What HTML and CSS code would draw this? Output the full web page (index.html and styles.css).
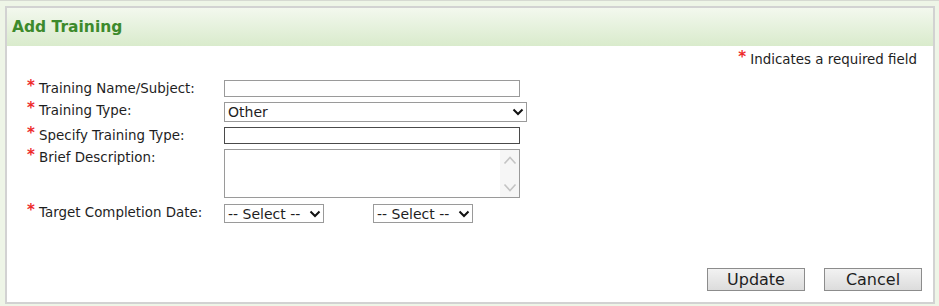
FILE: index.html
```html
<!DOCTYPE html>
<html lang="en">
<head>
    <meta charset="UTF-8">
    <title>Add Training</title>
    <link rel="stylesheet" href="styles.css">
</head>
<body>
    <div class="panel">
        <div class="panel-header">
            <h2>Add Training</h2>
        </div>

        <div class="panel-body">
            <p class="required-note"><span class="req">*</span> Indicates a required field</p>

            <!-- training form -->
            <form class="form-grid">
                <label class="field-label"><span class="req">*</span> Training Name/Subject:</label>
                <input type="text" class="text-input">

                <label class="field-label"><span class="req">*</span> Training Type:</label>
                <span class="select-wrap wide">
                    <select class="select-input">
                        <option>Other</option>
                    </select>
                    <svg class="chevron" viewBox="0 0 12 8" width="12" height="8"><path d="M1.5 1.5 L6 6 L10.5 1.5" fill="none" stroke="#111" stroke-width="2"/></svg>
                </span>

                <label class="field-label"><span class="req">*</span> Specify Training Type:</label>
                <input type="text" class="text-input dark">

                <label class="field-label"><span class="req">*</span> Brief Description:</label>
                <div class="textarea-box">
                    <textarea></textarea>
                    <div class="scroll-col">
                        <svg viewBox="0 0 14 10" width="14" height="10"><path d="M1.5 8.5 L7 2.5 L12.5 8.5" fill="none" stroke="#c4c4c4" stroke-width="1.6"/></svg>
                        <svg viewBox="0 0 14 10" width="14" height="10"><path d="M1.5 1.5 L7 7.5 L12.5 1.5" fill="none" stroke="#c4c4c4" stroke-width="1.6"/></svg>
                    </div>
                </div>

                <label class="field-label"><span class="req">*</span> Target Completion Date:</label>
                <div class="date-row">
                    <span class="select-wrap small">
                        <select class="select-input">
                            <option>-- Select --</option>
                        </select>
                        <svg class="chevron" viewBox="0 0 12 8" width="12" height="8"><path d="M1.5 1.5 L6 6 L10.5 1.5" fill="none" stroke="#111" stroke-width="2"/></svg>
                    </span>
                    <span class="select-wrap small">
                        <select class="select-input">
                            <option>-- Select --</option>
                        </select>
                        <svg class="chevron" viewBox="0 0 12 8" width="12" height="8"><path d="M1.5 1.5 L6 6 L10.5 1.5" fill="none" stroke="#111" stroke-width="2"/></svg>
                    </span>
                </div>
            </form>

            <div class="actions">
                <button type="button" class="btn">Update</button>
                <button type="button" class="btn">Cancel</button>
            </div>
        </div>
    </div>
</body>
</html>
```

FILE: styles.css
```css
body {
    margin: 0;
    padding: 5px 4px 2px 5px;
    background-color: #eef5e7;
    border-top: 1px solid #d6d9d2;
    font-family: "DejaVu Sans", Verdana, sans-serif;
    font-size: 13.4px;
    color: #1e1e1e;
}
.panel {
    border: 2px solid #d2d2d2;
    background-color: #ffffff;
    height: 298px;
    box-sizing: border-box;
    display: flex;
    flex-direction: column;
}
.panel-header {
    height: 38px;
    display: flex;
    align-items: center;
    padding-left: 5px;
    background: linear-gradient(#f3f8ee, #d9ebcc);
}
.panel-header h2 {
    margin: 0;
    font-size: 15.5px;
    font-weight: bold;
    color: #3d8a2c;
}
.panel-body {
    flex: 1;
    display: flex;
    flex-direction: column;
    padding: 5px 11px 11px 20px;
}
.required-note {
    margin: 0;
    text-align: right;
    padding-right: 5px;
    line-height: 17px;
}
.req {
    color: #ee2b2b;
    font-size: 15px;
    font-weight: bold;
    vertical-align: top;
    line-height: 12px;
}
.form-grid {
    display: grid;
    grid-template-columns: 197px auto;
    row-gap: 5px;
    justify-items: start;
    margin-top: 12px;
}
.field-label {
    line-height: 17px;
}
.text-input {
    width: 296px;
    height: 17px;
    box-sizing: border-box;
    border: 1px solid #9a9a9a;
    padding: 0 3px;
    font: inherit;
}
.text-input.dark {
    border-color: #4a4a4a;
}
.select-wrap {
    position: relative;
    display: inline-block;
}
.select-input {
    appearance: none;
    -webkit-appearance: none;
    width: 100%;
    height: 100%;
    box-sizing: border-box;
    border: 1px solid #9a9a9a;
    background-color: #ffffff;
    padding: 0 3px;
    font: inherit;
    font-size: 14px;
    color: #1e1e1e;
}
.select-wrap .chevron {
    position: absolute;
    right: 3px;
    top: 50%;
    margin-top: -4px;
    pointer-events: none;
}
.select-wrap.wide {
    width: 303px;
    height: 20px;
}
.select-wrap.small {
    width: 100px;
    height: 19px;
}
.textarea-box {
    width: 296px;
    height: 49px;
    box-sizing: border-box;
    border: 1px solid #9a9a9a;
    display: flex;
    margin-bottom: 1px;
}
.textarea-box textarea {
    flex: 1;
    border: none;
    resize: none;
    overflow: hidden;
    font: inherit;
}
.scroll-col {
    width: 19px;
    background-color: #f6f6f6;
    display: flex;
    flex-direction: column;
    justify-content: space-between;
    align-items: center;
    padding: 5px 0 4px;
}
.date-row {
    display: flex;
    gap: 49px;
}
.actions {
    margin-top: auto;
    display: flex;
    justify-content: flex-end;
    gap: 19px;
}
.btn {
    width: 98px;
    height: 23px;
    border: 1px solid #8c8c8c;
    background: linear-gradient(#f2f2f2, #dcdcdc);
    font-family: "DejaVu Sans", Verdana, sans-serif;
    font-size: 16px;
    color: #1e1e1e;
    padding: 0;
}
```
